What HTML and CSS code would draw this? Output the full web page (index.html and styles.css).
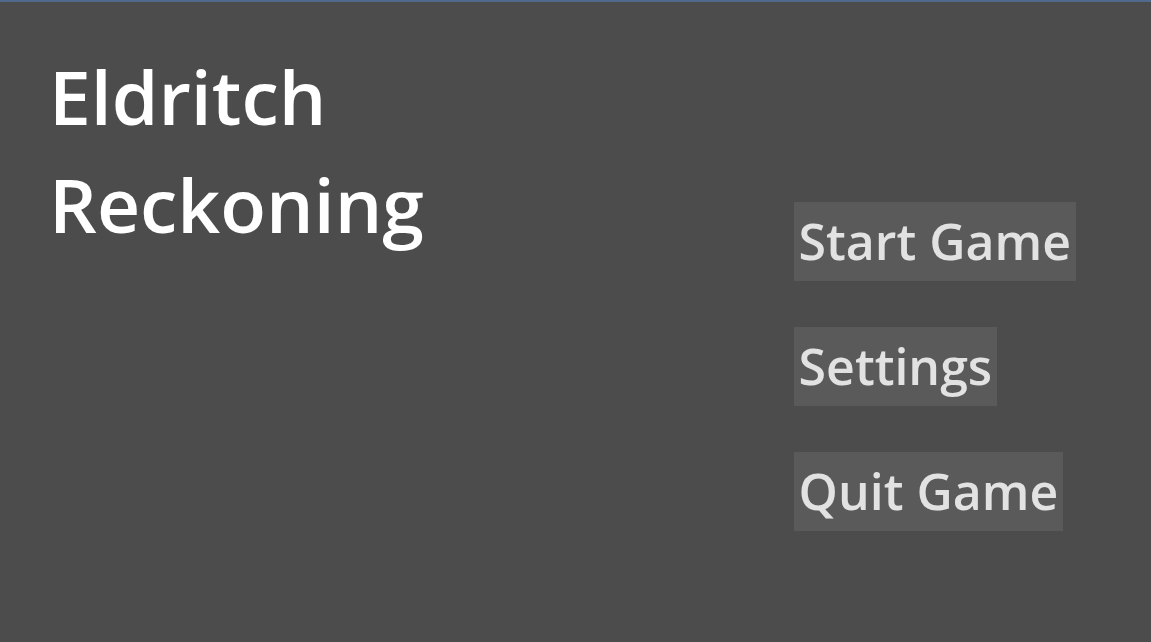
FILE: index.html
```html
<!DOCTYPE html>
<html>
<head>
<meta charset="utf-8">
<link rel="stylesheet" href="styles.css">
</head>
<body>
<div class="screen">
  <h1 class="title">Eldritch<br>Reckoning</h1>
  <nav class="menu">
    <button class="menu-btn">Start Game</button>
    <button class="menu-btn">Settings</button>
    <button class="menu-btn">Quit Game</button>
  </nav>
</div>
</body>
</html>
```
FILE: styles.css
```css
html, body {
  margin: 0;
  padding: 0;
  height: 100%;
  background: #4c4c4c;
}
body {
  border-top: 2px solid #50698c;
  box-sizing: border-box;
  font-family: "Open Sans", "Liberation Sans", sans-serif;
  overflow: hidden;
}
.screen {
  display: flex;
  justify-content: space-between;
  height: 100%;
}
.title {
  margin: 0;
  padding: 40px 0 0 49px;
  font-size: 75px;
  line-height: 108px;
  font-weight: 600;
  color: #ffffff;
}
.menu {
  display: flex;
  flex-direction: column;
  align-items: flex-start;
  gap: 46px;
  padding: 200px 75px 0 0;
}
.menu-btn {
  border: none;
  margin: 0;
  background: #5a5a5a;
  color: #e2e2e2;
  font-family: "Open Sans", "Liberation Sans", sans-serif;
  font-weight: 600;
  font-size: 50px;
  line-height: 69px;
  padding: 5px 5px;
  text-align: left;
  white-space: nowrap;
}
```
